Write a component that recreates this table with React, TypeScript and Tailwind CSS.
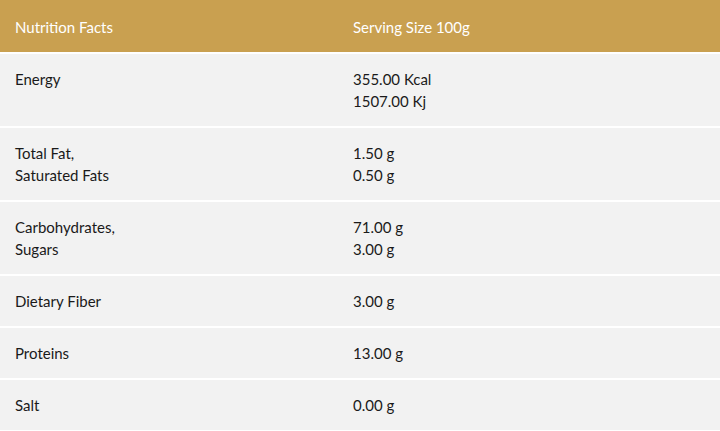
import React from 'react';

const rows: { label: string[]; value: string[] }[] = [
  { label: ['Energy'], value: ['355.00 Kcal', '1507.00 Kj'] },
  { label: ['Total Fat,', 'Saturated Fats'], value: ['1.50 g', '0.50 g'] },
  { label: ['Carbohydrates,', 'Sugars'], value: ['71.00 g', '3.00 g'] },
  { label: ['Dietary Fiber'], value: ['3.00 g'] },
  { label: ['Proteins'], value: ['13.00 g'] },
  { label: ['Salt'], value: ['0.00 g'] },
];

const App = () => {
  return (
    <div className="w-[720px] h-[431px] overflow-hidden bg-white font-['Lato',sans-serif] text-[15px] leading-[22px]">
      <div className="flex bg-[#c9a050] text-white pt-[16px] pb-[14px] border-b-2 border-white">
        <div className="w-[338px] px-[15px]">Nutrition Facts</div>
        <div className="flex-1 px-[15px]">Serving Size 100g</div>
      </div>
      {rows.map((row, i) => (
        <div key={i} className="flex bg-[#f2f2f2] text-[#1a1a1a] py-[14px] border-b-2 border-white">
          <div className="w-[338px] px-[15px]">
            {row.label.map((l) => (
              <div key={l}>{l}</div>
            ))}
          </div>
          <div className="flex-1 px-[15px]">
            {row.value.map((v) => (
              <div key={v}>{v}</div>
            ))}
          </div>
        </div>
      ))}
    </div>
  );
};

export default App;
